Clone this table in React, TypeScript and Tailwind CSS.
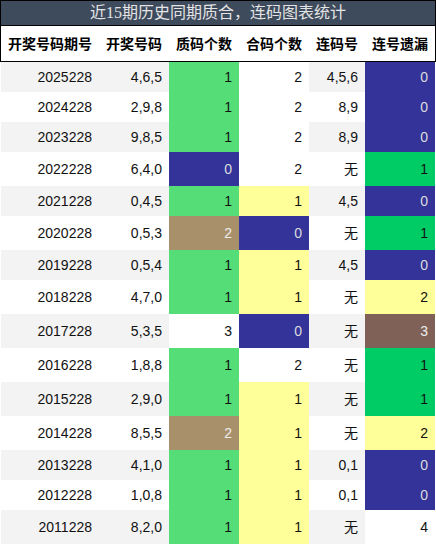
import React from "react";

type Row = [string, string, number, number, string, number];

const rows: Row[] = [
  ["2025228", "4,6,5", 1, 2, "4,5,6", 0],
  ["2024228", "2,9,8", 1, 2, "8,9", 0],
  ["2023228", "9,8,5", 1, 2, "8,9", 0],
  ["2022228", "6,4,0", 0, 2, "无", 1],
  ["2021228", "0,4,5", 1, 1, "4,5", 0],
  ["2020228", "0,5,3", 2, 0, "无", 1],
  ["2019228", "0,5,4", 1, 1, "4,5", 0],
  ["2018228", "4,7,0", 1, 1, "无", 2],
  ["2017228", "5,3,5", 3, 0, "无", 3],
  ["2016228", "1,8,8", 1, 2, "无", 1],
  ["2015228", "2,9,0", 1, 1, "无", 1],
  ["2014228", "8,5,5", 2, 1, "无", 2],
  ["2013228", "4,1,0", 1, 1, "0,1", 0],
  ["2012228", "1,0,8", 1, 1, "0,1", 0],
  ["2011228", "8,2,0", 1, 1, "无", 4],
];

const zhiCls: Record<number, string> = {
  0: "bg-[#333399] text-[#dcdcdc]",
  1: "bg-[#55de77] text-[#111111]",
  2: "bg-[#a8916a] text-[#eeeeee]",
  3: "bg-white text-[#111111]",
};
const heCls: Record<number, string> = {
  0: "bg-[#333399] text-[#dcdcdc]",
  1: "bg-[#ffff99] text-[#111111]",
  2: "bg-white text-[#111111]",
};
const missCls: Record<number, string> = {
  0: "bg-[#333399] text-[#dcdcdc]",
  1: "bg-[#00cc66] text-[#111111]",
  2: "bg-[#ffff99] text-[#111111]",
  3: "bg-[#7f6157] text-[#eeeeee]",
  4: "bg-white text-[#111111]",
};

const font = { fontFamily: '"Liberation Sans", "Noto Sans CJK SC", sans-serif' };

export default function App() {
  return (
    <div className="w-[436px] bg-white" style={font}>
      <div
        className="h-[26px] border border-black bg-[#3e4b5d] text-[#e4e4e4] text-[16px] flex items-center justify-center leading-none"
        style={{ fontFamily: '"Liberation Serif", "Noto Sans CJK SC", serif' }}
      >
        近15期历史同期质合，连码图表统计
      </div>
      <div className="h-[36px] border-l border-r border-b border-black flex items-center text-[14px] font-bold text-black leading-none">
        <div className="w-[98px] text-center">开奖号码期号</div>
        <div className="w-[70px] text-center">开奖号码</div>
        <div className="w-[70px] text-center">质码个数</div>
        <div className="w-[70px] text-center">合码个数</div>
        <div className="w-[56px] text-center">连码号</div>
        <div className="w-[70px] text-center">连号遗漏</div>
      </div>
      <div className="px-[1px]">
        {rows.map((r, i) => {
          const stripe = i % 2 === 0 ? "bg-[#f3f3f3]" : "bg-white";
          const h = r[4] === "无" ? "h-[34px]" : "h-[30px]";
          const cell = "flex items-center justify-end pr-[7px]";
          return (
            <div key={r[0]} className={`flex ${h} text-[14px] leading-none text-[#111111]`}>
              <div className={`w-[98px] ${cell} ${stripe}`}>{r[0]}</div>
              <div className={`w-[70px] ${cell} ${stripe}`}>{r[1]}</div>
              <div className={`w-[70px] ${cell} ${zhiCls[r[2]]}`}>{r[2]}</div>
              <div className={`w-[70px] ${cell} ${heCls[r[3]]}`}>{r[3]}</div>
              <div className={`w-[56px] ${cell} ${stripe}`}>{r[4]}</div>
              <div className={`w-[70px] ${cell} ${missCls[r[5]]}`}>{r[5]}</div>
            </div>
          );
        })}
      </div>
    </div>
  );
}
